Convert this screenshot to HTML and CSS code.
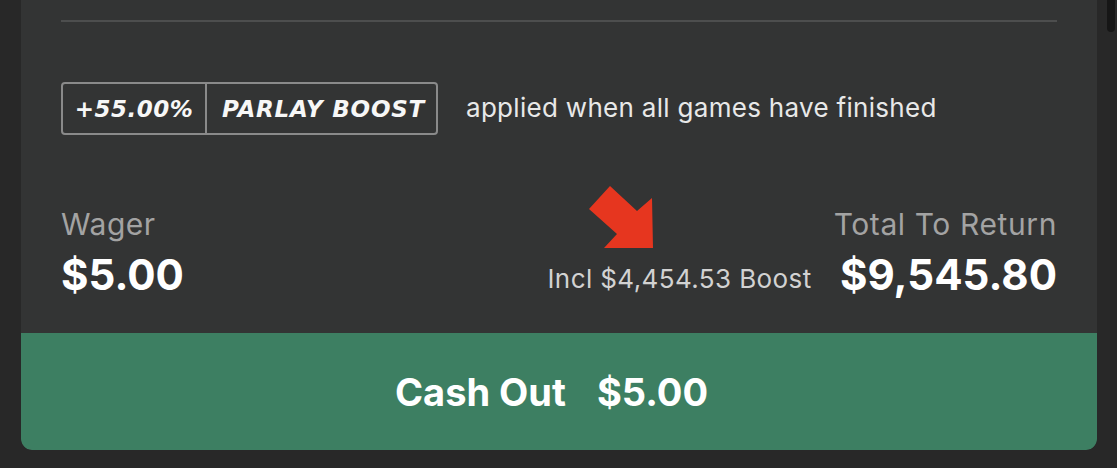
FILE: index.html
```html
<!DOCTYPE html>
<html lang="en">
<head>
<meta charset="utf-8">
<title>Parlay Cash Out</title>
<link rel="stylesheet" href="styles.css">
</head>
<body>
<div class="page">
  <section class="card">
    <div class="content">
      <div class="divider"></div>
      <div class="boost-row">
        <div class="badge">
          <span class="badge-pct">+55.00%</span>
          <span class="badge-label">PARLAY BOOST</span>
        </div>
        <span class="boost-note">applied when all games have finished</span>
      </div>
      <div class="totals">
        <div class="col">
          <span class="label">Wager</span>
          <span class="value">$5.00</span>
        </div>
        <div class="right">
          <span class="incl">
            <svg class="arrow" width="70" height="66" viewBox="0 0 70 66" aria-hidden="true">
              <polygon points="2,25 23,2 50,27 65,14 66,64 17,64 30,50" fill="#e6361f"/>
            </svg>
            Incl $4,454.53 Boost
          </span>
          <div class="col col-right">
            <span class="label">Total To Return</span>
            <span class="value">$9,545.80</span>
          </div>
        </div>
      </div>
    </div>
    <button class="cashout" type="button"><span>Cash Out</span><span>$5.00</span></button>
  </section>
  <div class="scroll-thumb"></div>
</div>
</body>
</html>
```

FILE: styles.css
```css
* { box-sizing: border-box; }

html, body {
  margin: 0;
  padding: 0;
  background: #282828;
  height: 100%;
  overflow: hidden;
}

body {
  font-family: "Inter", "Roboto", "Liberation Sans", sans-serif;
  color: #ffffff;
}

.page {
  position: relative;
  width: 1117px;
  height: 468px;
  padding-left: 21px;
}

.card {
  width: 1076px;
  height: 450px;
  background: #333434;
  border-radius: 0 0 11px 11px;
  overflow: hidden;
  display: flex;
  flex-direction: column;
}

.content {
  padding: 0 40px;
  flex: 1;
  display: flex;
  flex-direction: column;
}

.divider {
  margin-top: 20px;
  height: 2px;
  background: #4d4e4e;
}

.boost-row {
  margin-top: 60px;
  display: flex;
  align-items: center;
}

.badge {
  display: flex;
  height: 53px;
  border: 2px solid #8a8a8a;
  border-radius: 4px;
}

.badge-pct,
.badge-label {
  display: flex;
  align-items: center;
  font-family: "DejaVu Sans", "Lato", sans-serif;
  font-weight: 700;
  font-style: italic;
  font-size: 23px;
  color: #f7f7f7;
  letter-spacing: 0.5px;
}

.badge-pct {
  width: 144px;
  justify-content: center;
  border-right: 2px solid #8a8a8a;
}

.badge-label {
  width: 229px;
  justify-content: center;
  padding-left: 4px;
  letter-spacing: 0.8px;
}

.boost-note {
  margin-left: 28px;
  margin-top: -3px;
  font-size: 26px;
  color: #e8e8e8;
  letter-spacing: 0.3px;
}

.totals {
  margin-top: 71px;
  display: flex;
  justify-content: space-between;
  align-items: flex-end;
}

.col {
  display: flex;
  flex-direction: column;
}

.col-right {
  align-items: flex-end;
}

.label {
  font-size: 30px;
  line-height: 36px;
  color: #a3a3a3;
  letter-spacing: 0.5px;
}

.col-right .label {
  letter-spacing: 0.6px;
}

.value {
  margin-top: 9px;
  font-size: 42px;
  line-height: 48px;
  font-weight: 700;
  color: #ffffff;
}

.right {
  display: flex;
  align-items: flex-end;
}

.incl {
  position: relative;
  display: block;
  font-size: 26px;
  line-height: 40px;
  color: #d2d2d2;
  margin-right: 22px;
  letter-spacing: 0.4px;
}

.arrow {
  position: absolute;
  left: 40px;
  top: -75px;
}

.cashout {
  height: 117px;
  border: 0;
  margin: 0;
  padding: 0 15px 0 0;
  background: #3d7f62;
  color: #ffffff;
  font-family: "Inter", "Roboto", "Liberation Sans", sans-serif;
  font-weight: 700;
  font-size: 38px;
  display: flex;
  align-items: center;
  justify-content: center;
  gap: 31px;
  border-radius: 0 0 11px 11px;
}

.scroll-thumb {
  position: absolute;
  left: 1107px;
  top: 0;
  width: 8px;
  height: 32px;
  background: #161616;
  border-radius: 0 0 4px 4px;
}
```
